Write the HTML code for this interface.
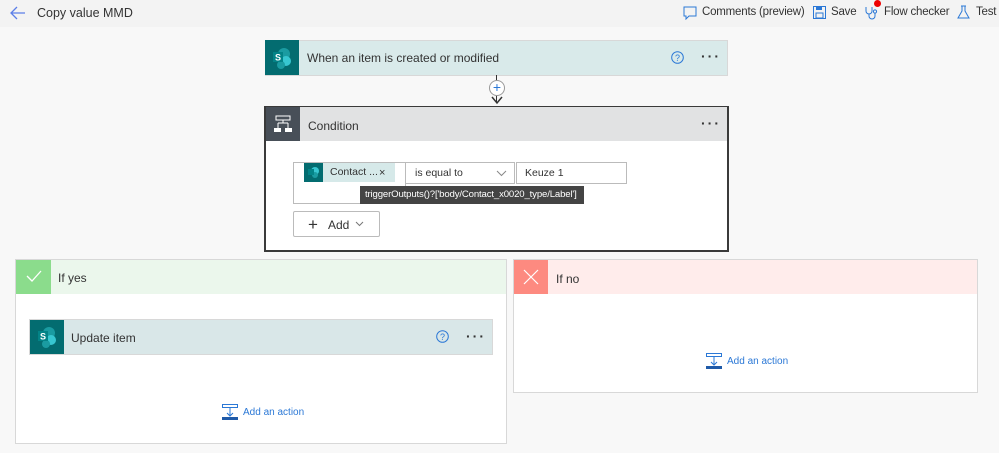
<!DOCTYPE html>
<html><head><style>
*{box-sizing:border-box;margin:0;padding:0}
body{width:999px;height:453px;background:#f8f8f8;font-family:"Liberation Sans",sans-serif;position:relative;overflow:hidden;color:#222}
.a{position:absolute}
.top{left:0;top:0;width:999px;height:27px;background:#f3f3f3}
.t{font-size:12px;color:#333;white-space:nowrap}
.tr{font-size:11.5px;letter-spacing:-0.2px}
.card{border:1px solid #d8d8d8}
.dots{font-size:14px;letter-spacing:2px;font-weight:bold;color:#333}
.spi{background:#036c70}
.link{color:#2b78d6;font-size:10px}
</style></head><body>
<div class="a top"></div>
<svg class="a" style="left:10px;top:6px" width="16" height="14"><path d="M15 7H2M7 1L1 7l6 6" stroke="#5b7ee8" stroke-width="1.3" fill="none"/></svg>
<div class="a t" style="left:37px;top:6px;font-size:12.5px">Copy value MMD</div>
<svg class="a" style="left:683px;top:6px" width="14" height="14"><path d="M1 1h12v9H6l-3 3v-3H1z" stroke="#2b78d6" fill="none"/></svg>
<div class="a t tr" style="left:702px;top:6px">Comments (preview)</div>
<svg class="a" style="left:813px;top:6px" width="13" height="13"><rect x=".5" y=".5" width="12" height="12" stroke="#2b78d6" fill="none"/><rect x="3" y="7" width="7" height="5" stroke="#2b78d6" fill="none"/><rect x="3" y="1" width="6" height="3" fill="#2b78d6"/></svg>
<div class="a t tr" style="left:831px;top:6px">Save</div>
<svg class="a" style="left:864px;top:4px" width="16" height="16"><path d="M2 3v4a3 3 0 006 0V3M5 10v2a3 3 0 006 0V9" stroke="#2b78d6" fill="none"/><circle cx="11" cy="7.5" r="1.6" stroke="#2b78d6" fill="none"/></svg>
<div class="a" style="left:874px;top:0;width:7px;height:7px;border-radius:50%;background:#e00"></div>
<div class="a t tr" style="left:884px;top:6px">Flow checker</div>
<svg class="a" style="left:957px;top:5px" width="13" height="15"><path d="M4 1h5M5 1v5L1 13h11L8 6V1" stroke="#2b78d6" fill="none"/></svg>
<div class="a t tr" style="left:976px;top:6px">Test</div>

<div class="a card" style="left:265px;top:40px;width:463px;height:36px;background:#d9eaea"></div>
<div class="a spi" style="left:265px;top:40px;width:34px;height:35px"></div>
<svg class="a" style="left:271px;top:47px" width="22" height="22"><circle cx="13" cy="7" r="6" fill="#1a9ba1"/><circle cx="15" cy="14" r="5" fill="#37c6d0"/><circle cx="10" cy="18" r="4" fill="#1a9ba1"/><rect x="2" y="5" width="10" height="10" fill="#038387"/><text x="4" y="13.5" font-size="9" fill="#fff" font-weight="bold" font-family="Liberation Sans">S</text></svg>
<div class="a t" style="left:307px;top:51px">When an item is created or modified</div>
<svg class="a" style="left:671px;top:51px" width="13" height="13"><circle cx="6.5" cy="6.5" r="5.8" stroke="#2b78d6" fill="none"/><text x="4" y="10" font-size="9" fill="#2b78d6" font-family="Liberation Sans">?</text></svg>
<div class="a dots" style="left:701px;top:48px">···</div>

<div class="a" style="left:496px;top:75px;width:1px;height:28px;background:#333"></div>
<div class="a" style="left:489px;top:80px;width:16px;height:16px;border-radius:50%;background:#fff;border:1px solid #999;color:#2b78d6;font-size:14px;line-height:13px;text-align:center">+</div>
<svg class="a" style="left:491px;top:96px" width="12" height="9"><path d="M1 1l5 6 5-6" stroke="#333" stroke-width="1.5" fill="none"/></svg>

<div class="a" style="left:264px;top:106px;width:465px;height:146px;border:2px solid #3a3a3a;background:#fff;border-top-width:1px"></div>
<div class="a" style="left:266px;top:107px;width:461px;height:34px;background:#e1e2e3"></div>
<div class="a" style="left:266px;top:107px;width:34px;height:34px;background:#484f58"></div>
<svg class="a" style="left:273px;top:115px" width="20" height="18"><path d="M3 1h14v4H3zM10 5v3M5 8h10M5 8v5M15 8v5" stroke="#fff" fill="none"/><rect x="1" y="13" width="7" height="4" fill="#fff"/><rect x="12" y="13" width="7" height="4" fill="#fff"/></svg>
<div class="a t" style="left:308px;top:119px">Condition</div>
<div class="a dots" style="left:701px;top:115px">···</div>

<div class="a" style="left:293px;top:162px;width:113px;height:42px;border:1px solid #bbb;background:#fff"></div>
<div class="a" style="left:304px;top:163px;width:91px;height:19px;background:#d6e9e9"></div>
<div class="a spi" style="left:304px;top:163px;width:19px;height:19px"></div>
<svg class="a" style="left:307px;top:166px" width="13" height="13"><circle cx="8" cy="5" r="4" fill="#37c6d0"/><circle cx="8" cy="9" r="3" fill="#1a9ba1"/><rect x="1" y="3" width="6" height="6" fill="#038387"/></svg>
<div class="a t" style="left:330px;top:166px;font-size:10.5px">Contact ...</div>
<div class="a t" style="left:379px;top:167px;font-size:11px">×</div>
<div class="a" style="left:405px;top:162px;width:110px;height:22px;border:1px solid #bbb;background:#fff"></div>
<div class="a t" style="left:415px;top:167px;font-size:10.5px">is equal to</div>
<svg class="a" style="left:496px;top:170px" width="11" height="7"><path d="M1 1l4.5 4.5L10 1" stroke="#888" fill="none"/></svg>
<div class="a" style="left:516px;top:162px;width:111px;height:22px;border:1px solid #bbb;background:#fff"></div>
<div class="a t" style="left:525px;top:167px;font-size:10.5px">Keuze 1</div>
<div class="a" style="left:360px;top:186px;width:224px;height:18px;background:#444;color:#fff;font-size:9.6px;letter-spacing:-0.15px;line-height:18px;padding-left:5px;white-space:nowrap;overflow:hidden">triggerOutputs()?['body/Contact_x0020_type/Label']</div>
<div class="a" style="left:293px;top:211px;width:87px;height:26px;border:1px solid #bbb;border-radius:2px;background:#fff"></div>
<div class="a t" style="left:308px;top:215px;font-size:17px;font-weight:300">+</div>
<div class="a t" style="left:328px;top:218px">Add</div>
<svg class="a" style="left:355px;top:221px" width="9" height="6"><path d="M1 1l3.5 3.5L8 1" stroke="#777" fill="none"/></svg>

<div class="a card" style="left:15px;top:259px;width:492px;height:185px;background:#fff"></div>
<div class="a" style="left:16px;top:260px;width:490px;height:34px;background:#ebf7ec"></div>
<div class="a" style="left:16px;top:260px;width:35px;height:34px;background:#8bdc8c"></div>
<svg class="a" style="left:25px;top:268px" width="18" height="16"><path d="M2 8l5 5L16 3" stroke="#fff" stroke-width="1.3" fill="none"/></svg>
<div class="a t" style="left:58px;top:271px">If yes</div>
<div class="a card" style="left:29px;top:319px;width:464px;height:36px;background:#d9e7e8"></div>
<div class="a spi" style="left:30px;top:320px;width:34px;height:34px"></div>
<svg class="a" style="left:36px;top:326px" width="22" height="22"><circle cx="13" cy="7" r="6" fill="#1a9ba1"/><circle cx="15" cy="14" r="5" fill="#37c6d0"/><circle cx="10" cy="18" r="4" fill="#1a9ba1"/><rect x="2" y="5" width="10" height="10" fill="#038387"/><text x="4" y="13.5" font-size="9" fill="#fff" font-weight="bold" font-family="Liberation Sans">S</text></svg>
<div class="a t" style="left:71px;top:331px">Update item</div>
<svg class="a" style="left:436px;top:330px" width="13" height="13"><circle cx="6.5" cy="6.5" r="5.8" stroke="#2b78d6" fill="none"/><text x="4" y="10" font-size="9" fill="#2b78d6" font-family="Liberation Sans">?</text></svg>
<div class="a dots" style="left:466px;top:328px">···</div>
<svg class="a" style="left:222px;top:404px" width="16" height="17"><rect x=".5" y=".5" width="15" height="3" stroke="#2b78d6" fill="none"/><path d="M8 4v8M5 9l3 3 3-3" stroke="#2b78d6" fill="none"/><rect x="0" y="13" width="16" height="3" fill="#1f5aa8"/></svg>
<div class="a link" style="left:243px;top:407px">Add an action</div>

<div class="a card" style="left:513px;top:259px;width:465px;height:134px;background:#fff"></div>
<div class="a" style="left:514px;top:260px;width:463px;height:34px;background:#ffeceb"></div>
<div class="a" style="left:514px;top:260px;width:34px;height:34px;background:#fd8a80"></div>
<svg class="a" style="left:522px;top:268px" width="18" height="18"><path d="M2 2l14 14M16 2L2 16" stroke="#fff" stroke-width="1.2"/></svg>
<div class="a t" style="left:556px;top:272px">If no</div>
<svg class="a" style="left:706px;top:353px" width="16" height="17"><rect x=".5" y=".5" width="15" height="3" stroke="#2b78d6" fill="none"/><path d="M8 4v8M5 9l3 3 3-3" stroke="#2b78d6" fill="none"/><rect x="0" y="13" width="16" height="3" fill="#1f5aa8"/></svg>
<div class="a link" style="left:727px;top:356px">Add an action</div>
</body></html>
